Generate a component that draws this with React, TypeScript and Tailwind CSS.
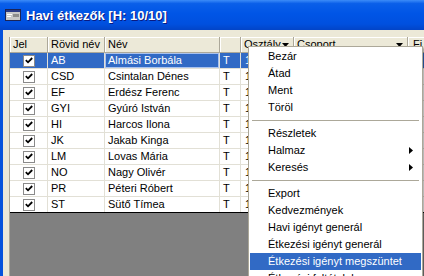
import React from "react";

const rows = [
  { code: "AB", name: "Almási Borbála" },
  { code: "CSD", name: "Csintalan Dénes" },
  { code: "EF", name: "Erdész Ferenc" },
  { code: "GYI", name: "Gyúró István" },
  { code: "HI", name: "Harcos Ilona" },
  { code: "JK", name: "Jakab Kinga" },
  { code: "LM", name: "Lovas Mária" },
  { code: "NO", name: "Nagy Olivér" },
  { code: "PR", name: "Péteri Róbert" },
  { code: "ST", name: "Sütő Tímea" },
];

type MenuEntry =
  | { sep: true }
  | { label: string; sub?: boolean; active?: boolean; sep?: false };

const menu: MenuEntry[] = [
  { label: "Bezár" },
  { label: "Átad" },
  { label: "Ment" },
  { label: "Töröl" },
  { sep: true },
  { label: "Részletek" },
  { label: "Halmaz", sub: true },
  { label: "Keresés", sub: true },
  { sep: true },
  { label: "Export" },
  { label: "Kedvezmények" },
  { label: "Havi igényt generál" },
  { label: "Étkezési igényt generál" },
  { label: "Étkezési igényt megszüntet", active: true },
  { label: "Étkezési feltételek" },
];

const DropArrow = () => (
  <svg width="7" height="4" viewBox="0 0 7 4" className="shrink-0">
    <path d="M0 0h7L3.5 4z" fill="#000" />
  </svg>
);

const Check = () => (
  <span className="w-[12px] h-[12px] border border-[#8a8a8a] bg-white flex items-center justify-center">
    <svg width="8" height="7" viewBox="0 0 8 7">
      <path d="M0.8 3.2 L3 5.3 L7.2 1" stroke="#000" strokeWidth="1.8" fill="none" />
    </svg>
  </span>
);

const TitleIcon = () => (
  <svg width="16" height="12" viewBox="0 0 16 12">
    <rect x="0.5" y="0.5" width="15" height="11" fill="#c8c8c8" stroke="#1b2456" />
    <rect x="1" y="1" width="14" height="2" fill="#2a3a86" />
    <rect x="2" y="5" width="5" height="1" fill="#fff" />
    <rect x="2" y="7" width="4" height="1" fill="#fff" />
    <rect x="8" y="5" width="6" height="3" fill="#8c8c8c" />
  </svg>
);

export default function App() {
  const headCell =
    "h-full shrink-0 flex items-center pl-[3px] bg-[#ece9d8] border-r border-b border-[#aca899] shadow-[inset_1px_1px_0_#fff]";
  const cell = "h-full shrink-0 flex items-center border-r border-[#e2e0d6]";

  return (
    <div className="w-[424px] h-[276px] overflow-hidden relative bg-[#ece9d8] font-['Liberation_Sans',Arial,sans-serif] text-[11px] text-black">
      {/* Title bar */}
      <div className="h-[30px] flex items-center pl-[5px] bg-[linear-gradient(to_bottom,#3c8cf8_0%,#0a5fe9_12%,#0055e6_45%,#0050df_80%,#0244c7_100%)]">
        <TitleIcon />
        <span className="ml-[5px] mt-[1px] text-white font-bold text-[13px] [text-shadow:1px_1px_0_#0a1a80]">
          Havi étkezők [H: 10/10]
        </span>
      </div>

      {/* Body */}
      <div className="flex h-[246px]">
        <div className="w-[3px] bg-[#0653dc]" />
        <div className="flex-1 min-w-0 pl-[6px] pt-[7px] flex flex-col">
          <div className="flex-1 flex flex-col border-l border-[#aca899] w-[600px]">
            {/* Header */}
            <div className="h-[16px] flex">
              <div className={`${headCell} w-[38px]`}>Jel</div>
              <div className={`${headCell} w-[57px]`}>Rövid név</div>
              <div className={`${headCell} w-[115px]`}>Név</div>
              <div className={`${headCell} w-[21px]`} />
              <div className={`${headCell} w-[53px] justify-between pr-[4px]`}>
                <span>Osztály</span>
                <DropArrow />
              </div>
              <div className={`${headCell} w-[114px] justify-between pr-[4px]`}>
                <span>Csoport</span>
                <DropArrow />
              </div>
              <div className={`${headCell} w-[80px] pl-[5px]`}>Fi</div>
            </div>

            {/* Rows */}
            {rows.map((r, i) => {
              const sel = i === 0;
              const bg = sel ? "bg-[#316ac5] text-white" : "bg-white";
              return (
                <div
                  key={r.code}
                  className={`h-[16px] flex border-b ${
                    i === rows.length - 1 ? "border-black" : "border-[#e2e0d6]"
                  } ${bg}`}
                >
                  <div className={`${cell} w-[38px] justify-center`}>
                    <Check />
                  </div>
                  <div className={`${cell} w-[57px] pl-[3px]`}>{r.code}</div>
                  <div
                    className={`${cell} w-[115px] pl-[3px] ${
                      sel ? "shadow-[inset_0_0_0_1px_#a9c2ee]" : ""
                    }`}
                  >
                    {r.name}
                  </div>
                  <div className={`${cell} w-[21px] pl-[3px]`}>T</div>
                  <div className={`${cell} w-[53px] pl-[4px]`}>1</div>
                  <div className={`${cell} w-[114px]`} />
                </div>
              );
            })}

            {/* Empty area */}
            <div className="flex-1 bg-[#808080]" />
          </div>
        </div>
      </div>

      {/* Context menu */}
      <div className="absolute left-[248px] top-[46px] w-[175px] bg-white border border-[#aca899] p-[1px] shadow-[2px_2px_2px_rgba(0,0,0,0.3)]">
        {menu.map((m, i) =>
          m.sep ? (
            <div key={i} className="h-[9px] flex items-center px-[2px]">
              <div className="w-full border-t border-[#aca899]" />
            </div>
          ) : (
            <div
              key={i}
              className={`h-[17px] flex items-center pl-[18px] pr-[8px] justify-between ${
                m.active ? "bg-[#316ac5] text-white" : ""
              }`}
            >
              <span>{m.label}</span>
              {m.sub && (
                <svg width="4" height="7" viewBox="0 0 4 7">
                  <path d="M0 0l4 3.5L0 7z" fill="#000" />
                </svg>
              )}
            </div>
          )
        )}
      </div>
    </div>
  );
}
